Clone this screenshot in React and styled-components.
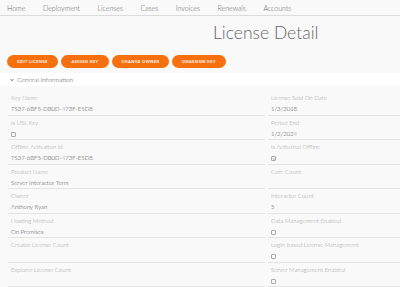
import React from "react";
import styled, { createGlobalStyle } from "styled-components";

const Global = createGlobalStyle`
  html, body { margin: 0; padding: 0; }
  body {
    background: #f9f9f9;
    font-family: Lato, "Open Sans", "Liberation Sans", sans-serif;
    color: #555;
    width: 400px;
    overflow: hidden;
  }
`;

const Nav = styled.nav`
  display: flex;
  align-items: center;
  gap: 17.5px;
  height: 15px;
  padding-left: 7px;
  border-bottom: 1px solid #dcdcdc;
  font-size: 7px;
  font-weight: 300;
  color: #666;
`;

const NavItem = styled.span`
  white-space: nowrap;
`;

const Title = styled.h1`
  margin: 0;
  height: 32px;
  display: flex;
  align-items: center;
  padding-left: 213px;
  font-size: 17.5px;
  font-weight: 300;
  color: #666;
`;

const Actions = styled.div`
  display: flex;
  gap: 3px;
  padding: 7px 7px 0;
`;

const Button = styled.button`
  height: 13px;
  width: ${(p) => p.w}px;
  padding: 0;
  border: none;
  border-radius: 7px;
  background: #f7700f;
  color: #fff;
  font-family: inherit;
  font-size: 4px;
  font-weight: 700;
  letter-spacing: 0.4px;
  text-transform: uppercase;
`;

const SectionHeader = styled.div`
  margin-top: 5px;
  height: 13px;
  background: #fff;
  display: flex;
  align-items: center;
  gap: 3px;
  padding-left: 10px;
  font-size: 6.5px;
  font-weight: 300;
  color: #444;
`;

const Chevron = styled.svg`
  width: 4px;
  height: 4px;
`;

const Grid = styled.div`
  display: grid;
  grid-template-columns: 257px 132px;
  column-gap: 3px;
  padding: 5px 0 0 8px;
`;

const Cell = styled.div`
  border-bottom: 1px solid #e4e4e4;
  padding: 3px 0 0 3px;
  box-sizing: border-box;
  height: 24.5px;
  display: flex;
  flex-direction: column;
`;

const Label = styled.div`
  font-size: 6px;
  line-height: 7px;
  font-weight: 300;
  color: #9a9a9a;
  white-space: nowrap;
`;

const Value = styled.div`
  margin-top: 4px;
  font-size: 6px;
  line-height: 8px;
  font-weight: 300;
  color: #444;
  white-space: nowrap;
  height: 8px;
`;

const Box = styled.span`
  display: inline-block;
  width: 5px;
  height: 5px;
  border: 0.8px solid #aaa;
  border-radius: 1px;
  box-sizing: border-box;
  margin-top: 2px;
  position: relative;
`;

const Check = styled.svg`
  position: absolute;
  left: 0;
  top: -1px;
  width: 5px;
  height: 5px;
`;

const fields = [
  ["Key Name", "TS37-6BF5-DB0D-473F-E5D8"],
  ["License Sold On Date", "1/3/2018"],
  ["Is USL Key", { box: false }],
  ["Period End", "1/2/2024"],
  ["Offline Activation Id", "TS37-6BF5-DB0D-473F-E5D8"],
  ["Is Activated Offline", { box: true }],
  ["Product Name", "Server Interactor Term"],
  ["Core Count", ""],
  ["Owner", "Anthony Ryan"],
  ["Interactor Count", "5"],
  ["Hosting Method", "On Premises"],
  ["Data Management Enabled", { box: false }],
  ["Creator License Count", ""],
  ["Login-based License Management", { box: false }],
  ["Explorer License Count", ""],
  ["Server Management Enabled", { box: false }],
];

function Field({ label, value }) {
  return (
    <Cell>
      <Label>{label}</Label>
      <Value>
        {typeof value === "object" ? (
          <Box>
            {value.box && (
              <Check viewBox="0 0 10 10">
                <path d="M2 5 L4.2 7.3 L8.5 2.5" fill="none" stroke="#888" strokeWidth="1.3" />
              </Check>
            )}
          </Box>
        ) : (
          value
        )}
      </Value>
    </Cell>
  );
}

export default function App() {
  return (
    <>
      <Global />
      <Nav>
        {["Home", "Deployment", "Licenses", "Cases", "Invoices", "Renewals", "Accounts"].map((n) => (
          <NavItem key={n}>{n}</NavItem>
        ))}
      </Nav>
      <Title>License Detail</Title>
      <Actions>
        <Button w={51}>Edit License</Button>
        <Button w={48}>Assign Key</Button>
        <Button w={57}>Change Owner</Button>
        <Button w={54}>Unassign Key</Button>
      </Actions>
      <SectionHeader>
        <Chevron viewBox="0 0 10 10">
          <path d="M1.5 3 L5 6.8 L8.5 3" fill="none" stroke="#333" strokeWidth="1.8" />
        </Chevron>
        General Information
      </SectionHeader>
      <Grid>
        {fields.map(([l, v]) => (
          <Field key={l} label={l} value={v} />
        ))}
      </Grid>
    </>
  );
}
